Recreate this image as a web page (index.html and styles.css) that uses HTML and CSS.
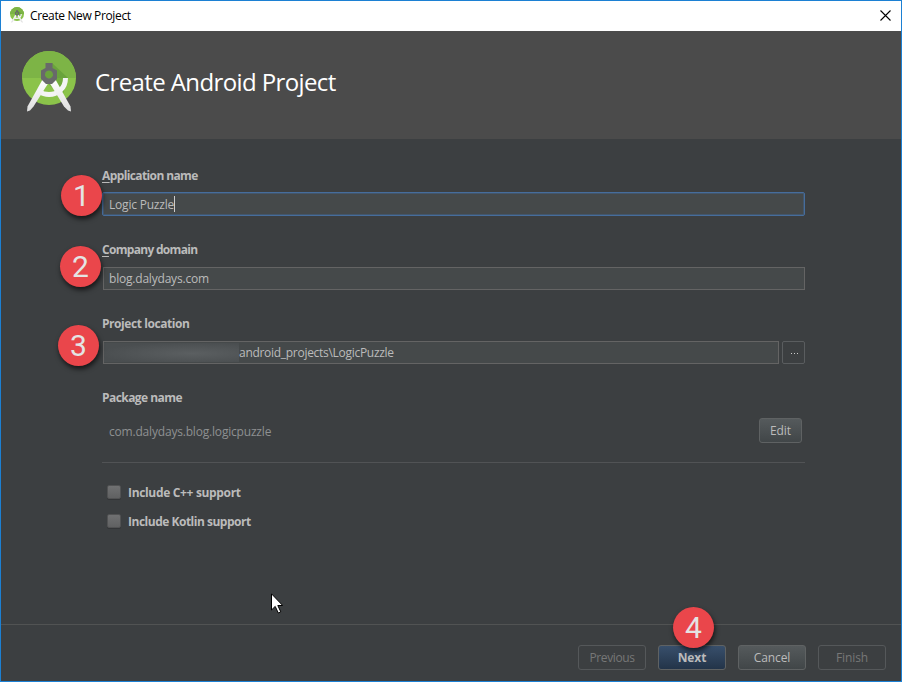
FILE: index.html
```html
<!DOCTYPE html>
<html lang="en">
<head>
<meta charset="utf-8">
<title>Create New Project</title>
<link rel="stylesheet" href="styles.css">
</head>
<body>
<svg class="defs" width="0" height="0" aria-hidden="true">
  <defs>
    <clipPath id="disc"><circle cx="27" cy="27" r="27"/></clipPath>
    <linearGradient id="leg" x1="0" y1="0" x2="0" y2="1"><stop offset="0" stop-color="#fff"/><stop offset="1" stop-color="#dedede"/></linearGradient>
    <symbol id="studio" viewBox="0 0 54 61">
      <circle cx="27" cy="27" r="27" fill="#8bc34a"/>
      <g clip-path="url(#disc)">
        <path d="M0 0h54v27H0z" fill="#7db446"/>
        <path d="M30 12L46 27L40 46L20 27z" fill="#4d8a2c" opacity=".4"/>
      </g>
      <path d="M43.500 27C43.500 38 35 43.500 27 43.500C23 43.500 20 42.500 17 40.500" fill="none" stroke="#f4f4f4" stroke-width="5"/>
      <path d="M20.500 28.500L5.500 55.500L5 60.500L8 59.500L11.500 55.500L27 31z" fill="url(#leg)"/>
      <path d="M33.500 28.500L48.500 55.500L49 60.500L46 59.500L42 55.500L27 31z" fill="url(#leg)"/>
      <path fill-rule="evenodd" d="M23.500 12h7V17l4.500 2.500v8.500L30 33h-6L19 28v-8.500l4.500-2.500zM27 19.500a4 4 0 1 0 .01 0z" fill="#68696a"/>
    </symbol>
  </defs>
</svg>
<div class="window">
  <div class="titlebar">
    <svg class="app-icon"><use href="#studio"/></svg>
    <span class="window-title">Create New Project</span>
    <svg class="close" viewBox="0 0 11 11"><path d="M.5 .5l10 10M10.500 .5l-10 10" stroke="#000" stroke-width="1.100"/></svg>
  </div>
  <header class="banner">
    <svg class="logo"><use href="#studio"/></svg>
    <h1>Create Android Project</h1>
  </header>
  <main class="form">
    <section class="group">
      <label class="caption app"><span class="key">A</span>pplication name</label>
      <div class="input focused"><span>Logic Puzzle</span><i class="caret"></i></div>
      <b class="badge one">1</b>
    </section>
    <section class="group">
      <label class="caption domain"><span class="key">C</span>ompany domain</label>
      <div class="input"><span>blog.dalydays.com</span></div>
      <b class="badge two">2</b>
    </section>
    <section class="group">
      <label class="caption location">Project location</label>
      <div class="path-row">
        <div class="input path"><i class="redacted"></i><span>android_projects\LogicPuzzle</span></div>
        <div class="browse"><i></i><i></i><i></i></div>
      </div>
      <b class="badge three">3</b>
    </section>
    <section class="package">
      <label class="caption pkg">Package name</label>
      <div class="package-row"><span class="package-id">com.dalydays.blog.logicpuzzle</span><div class="button edit">Edit</div></div>
    </section>
    <div class="options">
      <div class="option"><i class="box"></i><span>Include C++ support</span></div>
      <div class="option kotlin"><i class="box"></i><span>Include Kotlin support</span></div>
    </div>
  </main>
  <footer class="actions">
    <div class="button disabled previous">Previous</div>
    <div class="button primary">Next<b class="badge four">4</b></div>
    <div class="button">Cancel</div>
    <div class="button disabled">Finish</div>
  </footer>
  <svg class="cursor" viewBox="0 0 12 21"><path d="M.5 .8V17l3.700-3.600L7.300 20l2.500-1.100-3-6.400h4.900z" fill="#fff" stroke="#000"/></svg>
</div>
</body>
</html>
```
FILE: styles.css
```css
* { box-sizing: border-box; }
body { margin: 0; font: 12px "Open Sans", "Noto Sans", sans-serif; color: #bbb; }
.defs { position: absolute; }
.window {
  position: relative; width: 902px; height: 682px; border: 1px solid #1c80d3;
  background: #3c3f41; display: flex; flex-direction: column; white-space: nowrap;
}
.titlebar { height: 30px; background: #fff; color: #000; display: flex; align-items: center; padding: 0 10px 2px 9px; }
.app-icon { width: 14px; height: 16px; margin-right: 6px; }
.window-title { flex: 1; letter-spacing: -.37px; }
.close { width: 11px; height: 11px; }
.banner { height: 108px; background: #4b4b4b; display: flex; padding: 20px 21px; }
.logo { width: 54px; height: 61px; margin-right: 19px; }
h1 { margin: 0; font-size: 24px; line-height: 33px; padding-top: 14px; font-weight: 400; color: #fff; letter-spacing: -.61px; }
.form { flex: 1; padding: 26px 96px 0 101px; }
.group { height: 74px; position: relative; }
.caption { display: block; height: 27px; line-height: 22px; font-weight: 700; letter-spacing: -.35px; }
.app { letter-spacing: -.61px; }
.domain { letter-spacing: -.7px; }
.location { letter-spacing: -.43px; }
.pkg { letter-spacing: -.56px; }
.key { text-decoration: underline; text-underline-offset: 2px; }
.input { height: 23px; margin: 1px 0 0 1px; padding-left: 5px; border: 1px solid #646464; background: #45494a; display: flex; align-items: center; letter-spacing: -.2px; }
.focused { height: 24px; margin: 0; padding-left: 6px; border-color: #466d9c; border-radius: 2px; box-shadow: inset 0 0 0 1px #43566b; }
.caret { width: 1px; height: 16px; background: #ccc; }
.path-row { display: flex; gap: 3px; }
.path { flex: 1; padding: 0; letter-spacing: -.29px; }
.redacted { width: 135px; height: 19px; background: radial-gradient(ellipse at 65% 55%, #5b5f61, #4a4e50 75%); }
.browse { width: 23px; height: 23px; margin-top: 1px; border: 1px solid #5a5d5f; border-radius: 2px; display: flex; justify-content: center; align-items: center; gap: 2px; padding: 2px 0 0 1px; }
.browse i { width: 1px; height: 1px; background: #ccc; }
.package { display: flow-root; height: 76px; border-bottom: 1px solid #515355; }
.package-row { display: flex; justify-content: space-between; align-items: center; height: 25px; padding: 0 3px 0 7px; margin-top: 4px; color: #8e9091; }
.package-id { letter-spacing: -.19px; padding-top: 1px; }
.button {
  position: relative; width: 68px; height: 25px; line-height: 24px; text-align: center; color: #bbb;
  border: 1px solid #5f6263; border-radius: 3px; background: linear-gradient(#555a5c, #414648); letter-spacing: -.1px;
}
.edit { width: 43px; }
.disabled { background: none; color: #777; border-color: #55585a; }
.previous { letter-spacing: -.4px; }
.primary { background: linear-gradient(#384f6b, #233449); font-weight: 700; }
.options { padding: 18px 0 0 5px; }
.option { height: 22px; display: flex; align-items: center; margin-bottom: 7px; font-weight: 700; letter-spacing: -.33px; }
.kotlin { letter-spacing: -.49px; }
.box { width: 14px; height: 14px; margin-right: 7px; border: 1px solid #515253; border-radius: 2px; background: linear-gradient(#707172, #606162); box-shadow: 0 1px #333537; }
.actions { height: 57px; border-top: 1px solid #515353; padding: 20px 15px 0; display: flex; justify-content: flex-end; gap: 12px; }
.badge {
  position: absolute; width: 41px; height: 41px; border-radius: 50%; background: #ea464b; color: #e4e4e4;
  font: 400 30px/41px Roboto, "Liberation Sans", sans-serif; text-align: center; letter-spacing: 0; box-shadow: 1px 3px 5px rgba(0,0,0,.65);
}
.one { left: -41px; top: 10px; }
.two { left: -42px; top: 7px; }
.three { left: -44px; top: 12px; }
.four { left: 14px; top: -39px; }
.cursor { position: absolute; left: 270px; top: 592px; width: 12px; height: 21px; }
```
